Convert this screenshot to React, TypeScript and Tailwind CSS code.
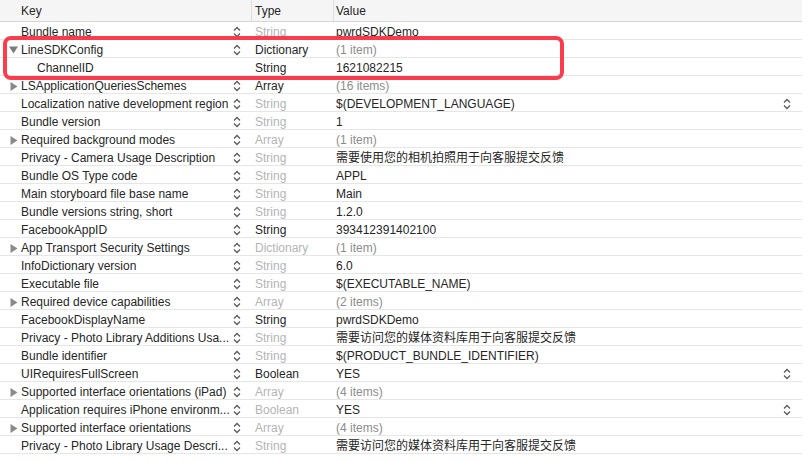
import React from "react";

type Row = {
  key: string;
  type: string;
  value: string;
  level?: number;
  toggle?: "open" | "closed";
  typeDark?: boolean;
  valueGray?: boolean;
  valueStepper?: boolean;
};

const rows: Row[] = [
  { key: "Bundle name", type: "String", value: "pwrdSDKDemo" },
  { key: "LineSDKConfig", type: "Dictionary", value: "(1 item)", toggle: "open", typeDark: true, valueGray: true },
  { key: "ChannelID", type: "String", value: "1621082215", level: 1, typeDark: true },
  { key: "LSApplicationQueriesSchemes", type: "Array", value: "(16 items)", toggle: "closed", typeDark: true, valueGray: true },
  { key: "Localization native development region", type: "String", value: "$(DEVELOPMENT_LANGUAGE)", valueStepper: true },
  { key: "Bundle version", type: "String", value: "1" },
  { key: "Required background modes", type: "Array", value: "(1 item)", toggle: "closed", valueGray: true },
  { key: "Privacy - Camera Usage Description", type: "String", value: "需要使用您的相机拍照用于向客服提交反馈" },
  { key: "Bundle OS Type code", type: "String", value: "APPL" },
  { key: "Main storyboard file base name", type: "String", value: "Main" },
  { key: "Bundle versions string, short", type: "String", value: "1.2.0" },
  { key: "FacebookAppID", type: "String", value: "393412391402100", typeDark: true },
  { key: "App Transport Security Settings", type: "Dictionary", value: "(1 item)", toggle: "closed", valueGray: true },
  { key: "InfoDictionary version", type: "String", value: "6.0" },
  { key: "Executable file", type: "String", value: "$(EXECUTABLE_NAME)" },
  { key: "Required device capabilities", type: "Array", value: "(2 items)", toggle: "closed", valueGray: true },
  { key: "FacebookDisplayName", type: "String", value: "pwrdSDKDemo", typeDark: true },
  { key: "Privacy - Photo Library Additions Usa...", type: "String", value: "需要访问您的媒体资料库用于向客服提交反馈" },
  { key: "Bundle identifier", type: "String", value: "$(PRODUCT_BUNDLE_IDENTIFIER)" },
  { key: "UIRequiresFullScreen", type: "Boolean", value: "YES", typeDark: true, valueStepper: true },
  { key: "Supported interface orientations (iPad)", type: "Array", value: "(4 items)", toggle: "closed", valueGray: true },
  { key: "Application requires iPhone environm...", type: "Boolean", value: "YES", valueStepper: true },
  { key: "Supported interface orientations", type: "Array", value: "(4 items)", toggle: "closed", valueGray: true },
  { key: "Privacy - Photo Library Usage Descri...", type: "String", value: "需要访问您的媒体资料库用于向客服提交反馈" },
];

function Stepper() {
  return (
    <svg width="8" height="12" viewBox="0 0 8 12" className="shrink-0">
      <path d="M1 4.5 L4 1.5 L7 4.5" fill="none" stroke="#5a5a5a" strokeWidth="1.3" />
      <path d="M1 7.5 L4 10.5 L7 7.5" fill="none" stroke="#5a5a5a" strokeWidth="1.3" />
    </svg>
  );
}

function Triangle({ open }: { open: boolean }) {
  return open ? (
    <svg width="9" height="8" viewBox="0 0 9 8" className="shrink-0">
      <path d="M0 0.5 L9 0.5 L4.5 7.5 Z" fill="#7d7d7d" />
    </svg>
  ) : (
    <svg width="8" height="9" viewBox="0 0 8 9" className="shrink-0">
      <path d="M0.5 0 L7.5 4.5 L0.5 9 Z" fill="#8a8a8a" />
    </svg>
  );
}

export default function App() {
  return (
    <div
      className="relative w-[811px] h-[461px] bg-white overflow-hidden text-[12px] text-[#262626]"
      style={{ fontFamily: '"Liberation Sans", "Noto Sans CJK SC", sans-serif' }}
    >
      <div className="w-[802px]">
        <div className="grid grid-cols-[251px_82px_1fr] h-[22px] bg-[#f5f5f5] border-b border-[#d6d6d6] items-center">
          <div className="pl-[21px]">Key</div>
          <div className="h-full flex items-center border-l border-[#dedede] pl-[3px]">Type</div>
          <div className="h-full flex items-center border-l border-[#dedede] pl-[2px]">Value</div>
        </div>
        {rows.map((r, i) => (
          <div key={i} className="grid grid-cols-[251px_82px_1fr] h-[18px] pt-[1px] border-b border-[#e6e6e6] items-center">
            <div className="flex items-center h-full pr-[10px]">
              <div className="w-[21px] shrink-0 flex items-center justify-end pr-[3px]">
                {r.toggle && <Triangle open={r.toggle === "open"} />}
              </div>
              <div className={`${r.level ? "pl-[16px]" : ""} flex-1 whitespace-nowrap overflow-hidden`}>{r.key}</div>
              {r.level ? null : <Stepper />}
            </div>
            <div className={`pl-[4px] ${r.typeDark ? "text-[#262626]" : "text-[#b4b4b4]"}`}>{r.type}</div>
            <div className="flex items-center pl-[3px] pr-[11px]">
              <div className={`flex-1 whitespace-nowrap overflow-hidden ${r.valueGray ? "text-[#8c8c8c]" : ""}`}>{r.value}</div>
              {r.valueStepper && <Stepper />}
            </div>
          </div>
        ))}
      </div>
      <div className="absolute left-[3px] top-[36px] w-[561px] h-[44px] border-[4px] border-[#fa3c4c] rounded-[8px]" />
    </div>
  );
}
